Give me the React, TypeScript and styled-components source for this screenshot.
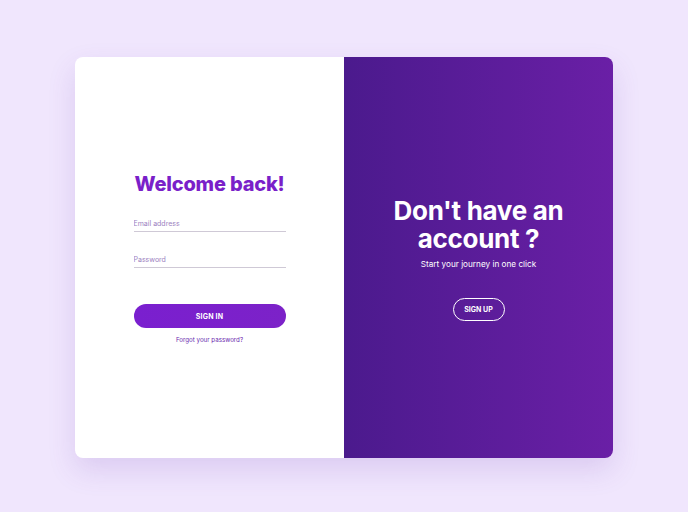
import styled, { createGlobalStyle } from "styled-components";

const GlobalStyle = createGlobalStyle`
    html, body {
        margin: 0;
        padding: 0;
        background: #f0e6fd;
        font-family: Inter, "Noto Sans", sans-serif;
    }
`

export default function App() {
    return (
        <>
            <GlobalStyle />
            <Page>
                <Card>
                    <SignInPanel>
                        <Title>Welcome back!</Title>
                        <Form>
                            <Field>
                                <input type="email" placeholder="Email address" />
                            </Field>
                            <Field>
                                <input type="password" placeholder="Password" />
                            </Field>
                        </Form>
                        <PrimaryButton>SIGN IN</PrimaryButton>
                        <ForgotLink href="#">Forgot your password?</ForgotLink>
                    </SignInPanel>
                    <SignUpPanel>
                        <Heading>Don't have an account ?</Heading>
                        <Subtitle>Start your journey in one click</Subtitle>
                        <GhostButton>SIGN UP</GhostButton>
                    </SignUpPanel>
                </Card>
            </Page>
        </>
    )
}

const Page = styled.main`
    width: 688px;
    height: 512px;
    display: flex;
    align-items: center;
    justify-content: center;
    padding-top: 3px;
    box-sizing: border-box;
`
const Card = styled.div`
    width: 538px;
    height: 401px;
    display: grid;
    grid-template-columns: 269px 269px;
    border-radius: 8px;
    overflow: hidden;
    background: #fff;
    box-shadow: 0 12px 28px rgba(110, 60, 180, 0.16);
`
const SignInPanel = styled.section`
    display: flex;
    flex-direction: column;
    align-items: center;
    justify-content: center;
    padding-top: 0;
`
const Title = styled.h1`
    margin: 0;
    font-size: 20px;
    font-weight: 800;
    letter-spacing: -0.2px;
    color: #7a1fc9;
`
const Form = styled.div`
    width: 152px;
    display: flex;
    flex-direction: column;
    gap: 14px;
    margin-top: 14px;
`
const Field = styled.label`
    display: block;
    border-bottom: 1px solid #cfc9d6;
    input {
        width: 100%;
        border: none;
        outline: none;
        padding: 0 0 3px;
        background: transparent;
        font-family: inherit;
        font-size: 7px;
        color: #333;
        &::placeholder {
            color: #9b7fc0;
        }
    }
`
const PrimaryButton = styled.button`
    width: 152px;
    height: 24px;
    margin-top: 36px;
    border: none;
    border-radius: 12px;
    background: linear-gradient(90deg, #7a1fcf, #7c22c8);
    color: #fff;
    font-family: inherit;
    font-size: 7px;
    font-weight: 700;
    letter-spacing: 0.2px;
`
const ForgotLink = styled.a`
    margin-top: 8px;
    font-size: 6.2px;
    color: #6a1fae;
    text-decoration: none;
`
const SignUpPanel = styled.section`
    display: flex;
    flex-direction: column;
    align-items: center;
    justify-content: center;
    padding-top: 2px;
    background: linear-gradient(90deg, #4b1a8d, #6a1fa6);
    color: #fff;
    text-align: center;
`
const Heading = styled.h2`
    margin: 0;
    width: 190px;
    font-size: 26px;
    line-height: 28px;
    font-weight: 700;
    letter-spacing: -0.3px;
`
const Subtitle = styled.p`
    margin: 6px 0 0;
    font-size: 8.2px;
`
const GhostButton = styled.button`
    margin-top: 29px;
    width: 52px;
    height: 23px;
    border: 1px solid #fff;
    border-radius: 12px;
    background: transparent;
    color: #fff;
    font-family: inherit;
    font-size: 7px;
    font-weight: 700;
`
